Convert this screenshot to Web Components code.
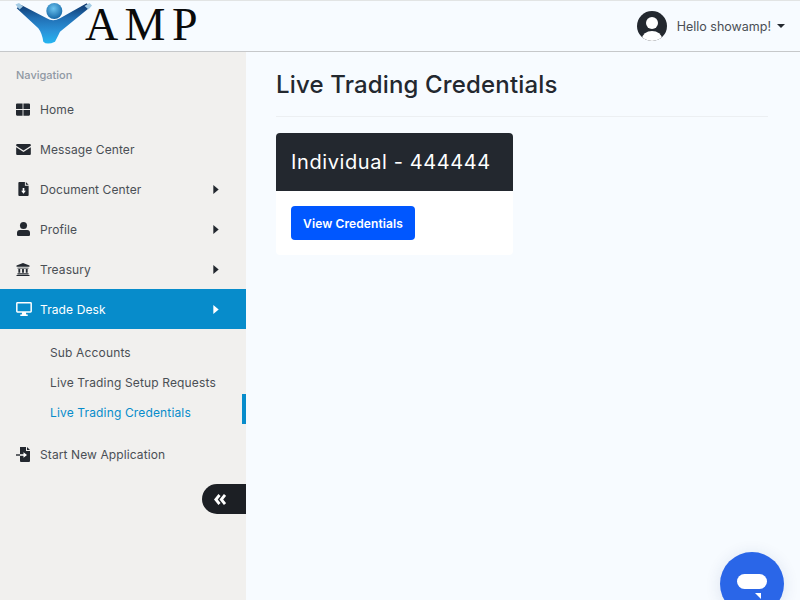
<!DOCTYPE html>
<html>
<head>
<meta charset="utf-8">
<title>Live Trading Credentials</title>
<style>
    html, body { margin: 0; height: 100%; overflow: hidden; }
    body { font-family: "Inter", "Liberation Sans", sans-serif; background: #f7fbff; }
</style>
</head>
<body>
<app-shell>
    <top-bar slot="top"></top-bar>
    <side-nav slot="side"></side-nav>
    <credentials-page></credentials-page>
</app-shell>
<chat-bubble></chat-bubble>

<script>
const ICONS = {
    home: '<svg viewBox="0 0 16 14" width="14" height="13"><path fill="#23282f" d="M0 1.200Q0 0 1.200 0H7.500V6.500H0ZM8.500 0H14.800Q16 0 16 1.200V6.500H8.500ZM0 7.500H7.500V14H1.200Q0 14 0 12.800ZM8.500 7.500H16V12.800Q16 14 14.800 14H8.500Z"/></svg>',
    mail: '<svg viewBox="0 0 16 12" width="15" height="11"><path fill="#23282f" d="M1.200 0H14.800Q16 0 16 1.200V2L8 7 0 2V1.200Q0 0 1.200 0ZM0 3.600L8 8.600 16 3.600V10.800Q16 12 14.800 12H1.200Q0 12 0 10.800Z"/></svg>',
    doc: '<svg viewBox="0 0 11 15" width="11" height="14" style="margin-left:2px"><path fill="#23282f" d="M1 0H7V4H11V14Q11 15 10 15H1Q0 15 0 14V1Q0 0 1 0ZM8 0L11 3H8Z"/><path fill="#fff" d="M4.600 6.500H6.400V9.500H8L5.500 12.500 3 9.500H4.600Z"/></svg>',
    user: '<svg viewBox="0 0 14 15" width="13" height="14" style="margin-left:1px"><circle cx="7" cy="3.800" r="3.800" fill="#23282f"/><path fill="#23282f" d="M3 8.600H11Q14 8.600 14 12V13.600Q14 15 12.600 15H1.400Q0 15 0 13.600V12Q0 8.600 3 8.600Z"/></svg>',
    bank: '<svg viewBox="0 0 14 14" width="14" height="13"><path fill="#23282f" d="M7 0L14 2.800V4H0V2.800ZM1 5H13V6H1ZM2 6.500H4V10.500H2ZM6 6.500H8V10.500H6ZM10 6.500H12V10.500H10ZM1 11H13V12.300H1ZM0 12.800H14V14H0Z"/></svg>',
    desk: '<svg viewBox="0 0 17 15" width="16" height="14"><path fill="#fff" fill-rule="evenodd" d="M1.500 0H15.500Q17 0 17 1.500V10Q17 11.500 15.500 11.500H10.500L11 13.300H12.500V15H4.500V13.300H6L6.500 11.500H1.500Q0 11.500 0 10V1.500Q0 0 1.500 0ZM1.600 1.600V9.900H15.400V1.600Z"/></svg>',
    start: '<svg viewBox="0 0 15 15" width="15" height="15"><path fill="#23282f" d="M4 0H10V4H14V14Q14 15 13 15H5Q4 15 4 14V9.500H4V5.500H4Z"/><path fill="#23282f" d="M11 0L14 3H11Z"/><path fill="#23282f" d="M0 7.300H4V8.700H0Z"/><path fill="#fff" d="M4 7.300H7.500V5.200L11 8 7.500 10.800V8.700H4Z"/></svg>',
    caret: '<svg viewBox="0 0 6 10" width="6" height="9"><path fill="currentColor" d="M0 0L6 5 0 10Z"/></svg>'
};

class AppShell extends HTMLElement {
    constructor() {
        super();
        const shadowRoot = this.attachShadow({mode: 'open'});
        shadowRoot.innerHTML = '<style>' +
            ':host { display: flex; flex-direction: column; height: 100vh; }' +
            '.body { display: flex; flex: 1; min-height: 0; }' +
            '.content { flex: 1; min-width: 0; padding: 0 32px 0 30px; }' +
            '</style>' +
            '<slot name="top"></slot>' +
            '<div class="body"><slot name="side"></slot><div class="content"><slot></slot></div></div>';
    }
}
customElements.define('app-shell', AppShell);

class TopBar extends HTMLElement {
    constructor() {
        super();
        const shadowRoot = this.attachShadow({mode: 'open'});
        shadowRoot.innerHTML = '<style>' +
            ':host { display: flex; align-items: stretch; justify-content: space-between; height: 52px; box-sizing: border-box; background: #f7fbff; border-top: 1px solid #e2e4e4; border-bottom: 1px solid #c6c8ca; flex: none; }' +
            '.logo { display: flex; align-items: flex-start; padding-left: 15px; }' +
            '.logo svg { display: block; }' +
            '.word { font: 46px/46px "Liberation Serif", serif; color: #0a0a0a; letter-spacing: 6.4px; margin: 1px 0 0 -8px; }' +
            '.user { display: flex; align-items: center; padding-right: 15px; color: #4a4f55; font-size: 12.5px; }' +
            '.user svg.avatar { margin-right: 10px; }' +
            '.drop { width: 0; height: 0; margin-left: 6px; border: 4px solid transparent; border-top-color: #23282f; border-bottom: 0; }' +
            '</style>' +
            '<div class="logo">' +
            '<svg viewBox="15 1 78 46" width="78" height="46">' +
            '<defs><linearGradient id="b" gradientUnits="userSpaceOnUse" x1="0" y1="5" x2="0" y2="43"><stop offset="0" stop-color="#0f3a70"/><stop offset="0.35" stop-color="#2170b5"/><stop offset="0.7" stop-color="#2a93d9"/><stop offset="1" stop-color="#25b4f0"/></linearGradient>' +
            '<radialGradient id="h" cx="0.45" cy="0.35" r="0.65"><stop offset="0" stop-color="#6cc4f0"/><stop offset="1" stop-color="#1568a8"/></radialGradient></defs>' +
            '<path fill="url(#b)" d="M16.700 8.300L38.300 28.300Q42 33 43.300 41.700Q47 45.500 55 41.700Q58 36 60 31.700L90 7.300L86.700 3.300L60 18.300Q53 22 46.700 18.300L20.700 4.700Z"/>' +
            '<path fill="#a4cbe4" d="M15.500 4.500L19 3L23 6.500L19.500 9.500ZM84.500 6L89.500 3L92 5.500L88.500 9.500Z"/>' +
            '<circle cx="54.300" cy="11" r="8" fill="url(#h)"/>' +
            '</svg>' +
            '<span class="word">AMP</span>' +
            '</div>' +
            '<div class="user">' +
            '<svg class="avatar" viewBox="0 0 30 30" width="30" height="30"><defs><clipPath id="c"><circle cx="15" cy="15" r="15"/></clipPath></defs><g clip-path="url(#c)"><rect width="30" height="30" fill="#23282f"/><circle cx="15" cy="12" r="6" fill="#fff"/><ellipse cx="15" cy="28" rx="10" ry="8" fill="#fff"/></g></svg>' +
            '<span>Hello showamp!</span><span class="drop"></span>' +
            '</div>';
    }
}
customElements.define('top-bar', TopBar);

class NavItem extends HTMLElement {
    constructor() {
        super();
        this.attachShadow({mode: 'open'});
    }
    connectedCallback() {
        const caret = this.hasAttribute('caret') ? '<span class="caret">' + ICONS.caret + '</span>' : '';
        this.shadowRoot.innerHTML = '<style>' +
            ':host { display: flex; align-items: center; height: 40px; padding: 0 27px 0 16px; color: #4a4f55; font-size: 12px; letter-spacing: 0.1px; }' +
            ':host([active]) { background: #078ccb; color: #fff; }' +
            '.icon { width: 24px; display: flex; align-items: center; flex: none; }' +
            '.icon svg { display: block; }' +
            '.label { flex: 1; }' +
            '.caret { display: flex; color: #23282f; }' +
            ':host([active]) .caret { color: #fff; }' +
            '</style>' +
            '<span class="icon">' + ICONS[this.getAttribute('icon')] + '</span>' +
            '<span class="label"><slot></slot></span>' + caret;
    }
}
customElements.define('nav-item', NavItem);

class SubItem extends HTMLElement {
    constructor() {
        super();
        const shadowRoot = this.attachShadow({mode: 'open'});
        shadowRoot.innerHTML = '<style>' +
            ':host { display: flex; align-items: center; height: 30px; padding-left: 50px; color: #4a4f55; font-size: 12px; letter-spacing: 0.15px; box-sizing: border-box; }' +
            /* the bar sits 3px above the text's row in the reference */
            ':host([active]) { color: #078ccb; border-right: 4px solid #078ccb; padding-top: 6px; margin: -3px 0 3px; }' +
            '</style><slot></slot>';
    }
}
customElements.define('sub-item', SubItem);

class SideNav extends HTMLElement {
    constructor() {
        super();
        const shadowRoot = this.attachShadow({mode: 'open'});
        shadowRoot.innerHTML = '<style>' +
            ':host { display: block; position: relative; width: 246px; flex: none; background: #f1f0ee; }' +
            '.head { padding: 16px 16px 0; height: 37px; box-sizing: border-box; font-size: 11px; font-weight: 500; color: #8f98a3; line-height: 14px; }' +
            '.sub { padding: 8px 0 7px; }' +
            '.toggle { position: absolute; left: 202px; top: 432px; width: 44px; height: 30px; border-radius: 15px 0 0 15px; background: #1c1f24; color: #fff; display: flex; align-items: center; padding-left: 12px; box-sizing: border-box; }' +
            '</style>' +
            '<div class="head">Navigation</div>' +
            '<nav-item icon="home">Home</nav-item>' +
            '<nav-item icon="mail">Message Center</nav-item>' +
            '<nav-item icon="doc" caret>Document Center</nav-item>' +
            '<nav-item icon="user" caret>Profile</nav-item>' +
            '<nav-item icon="bank" caret>Treasury</nav-item>' +
            '<nav-item icon="desk" caret active>Trade Desk</nav-item>' +
            '<div class="sub">' +
            '<sub-item>Sub Accounts</sub-item>' +
            '<sub-item>Live Trading Setup Requests</sub-item>' +
            '<sub-item active>Live Trading Credentials</sub-item>' +
            '</div>' +
            '<nav-item icon="start">Start New Application</nav-item>' +
            '<div class="toggle"><svg viewBox="0 0 12 11" width="12" height="11"><path fill="none" stroke="#fff" stroke-width="2.800" d="M5.500 1L1.800 5.500 5.500 10M11 1L7.300 5.500 11 10"/></svg></div>';
    }
}
customElements.define('side-nav', SideNav);

class AccountCard extends HTMLElement {
    constructor() {
        super();
        const shadowRoot = this.attachShadow({mode: 'open'});
        shadowRoot.innerHTML = '<style>' +
            ':host { display: block; width: 237px; background: #fff; border-radius: 4px; overflow: hidden; }' +
            '.head { height: 58px; display: flex; align-items: center; padding-left: 15px; background: #23282f; color: #fff; font-size: 20px; letter-spacing: 0.6px; }' +
            '.body { padding: 15px; }' +
            'button { display: block; width: 124px; height: 34px; padding: 0; border: 0; border-radius: 4px; background: #0057ff; color: #fff; font: 600 12px "Inter", "Liberation Sans", sans-serif; letter-spacing: 0.1px; }' +
            '</style>' +
            '<div class="head"><slot></slot></div>' +
            '<div class="body"><button>View Credentials</button></div>';
    }
}
customElements.define('account-card', AccountCard);

class CredentialsPage extends HTMLElement {
    constructor() {
        super();
        const shadowRoot = this.attachShadow({mode: 'open'});
        shadowRoot.innerHTML = '<style>' +
            ':host { display: block; }' +
            'h1 { margin: 0 0 16px; padding: 18px 0 16px; font-size: 24px; line-height: 30px; letter-spacing: 0.15px; font-weight: 500; color: #23282f; border-bottom: 1px solid #eceff2; }' +
            '</style>' +
            '<h1>Live Trading Credentials</h1>' +
            '<account-card>Individual - 444444</account-card>';
    }
}
customElements.define('credentials-page', CredentialsPage);

class ChatBubble extends HTMLElement {
    constructor() {
        super();
        const shadowRoot = this.attachShadow({mode: 'open'});
        shadowRoot.innerHTML = '<style>' +
            ':host { position: fixed; left: 720px; top: 552px; width: 64px; height: 64px; border-radius: 50%; background: #2a66e8; box-shadow: 0 2px 16px rgba(30,60,120,0.12); display: block; }' +
            '.msg { position: absolute; left: 17px; top: 22px; width: 30px; height: 15px; border-radius: 7.500px; background: #fff; }' +
            '.tail { position: absolute; left: 35px; top: 41px; width: 0; height: 0; border-top: 6px solid #fff; border-left: 6px solid transparent; }' +
            '</style><div class="msg"></div><div class="tail"></div>';
    }
}
customElements.define('chat-bubble', ChatBubble);
</script>
</body>
</html>
